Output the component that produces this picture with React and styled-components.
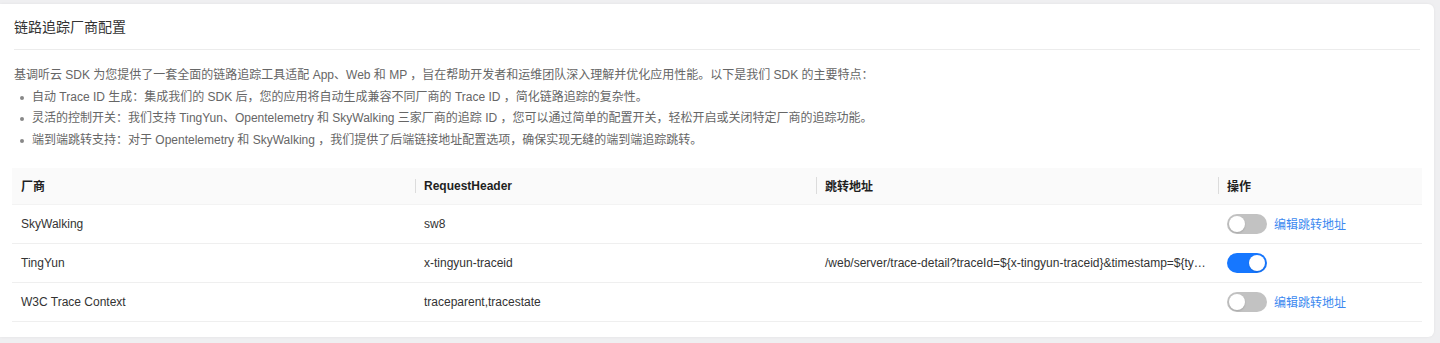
import React, { useState } from 'react'
import styled, { createGlobalStyle } from 'styled-components'

const GlobalStyle = createGlobalStyle`
  body {
    margin: 0;
    background: #efeff1;
    font-family: "Liberation Sans", "Noto Sans CJK SC", sans-serif;
  }
`

const Page = styled.div`
  padding: 4px 6px 8px 0;
`

const Card = styled.div`
  background: #fff;
  border-radius: 0 6px 6px 0;
  box-shadow: 0 0 3px rgba(0, 0, 0, 0.06);
  padding: 0 14px 15px;
`

const Title = styled.div`
  padding: 13px 0 12px;
  font-size: 14px;
  line-height: 20px;
  color: #333;
  border-bottom: 1px solid #ececec;
`

const Intro = styled.div`
  margin-top: 15px;
  font-size: 12px;
  line-height: 21.7px;
  color: #666;
`

const List = styled.ul`
  margin: 0;
  padding: 0;
  list-style: none;
`

const Item = styled.li`
  display: flex;
  align-items: center;

  &::before {
    content: '';
    width: 4px;
    height: 4px;
    border-radius: 50%;
    background: #888;
    margin: 0 8px 0 6px;
  }
`

const Table = styled.div`
  margin: 16px -2px 0;
  font-size: 12px;
`

const Row = styled.div`
  display: grid;
  grid-template-columns: 403px 401px 402px 1fr;
  align-items: center;
  height: ${p => (p.$head ? '36px' : '38px')};
  background: ${p => (p.$head ? '#fafafa' : '#fff')};
  border-bottom: 1px solid ${p => (p.$head ? '#f3f3f3' : '#efefef')};
  color: ${p => (p.$head ? '#1f1f1f' : '#333')};
  font-weight: ${p => (p.$head ? 700 : 400)};
`

const Cell = styled.div`
  position: relative;
  padding: 0 9px;
  white-space: nowrap;
  overflow: hidden;
  text-overflow: ellipsis;
  display: ${p => (p.$actions ? 'flex' : 'block')};
  align-items: center;
  gap: 7px;

  ${p =>
    p.$sep &&
    `
    &::before {
      content: '';
      position: absolute;
      left: 0;
      top: 50%;
      width: 1px;
      height: 19px;
      margin-top: -10px;
      background: #dcdcdc;
    }
  `}
`

const Switch = styled.button`
  position: relative;
  flex: none;
  width: 40px;
  height: 20px;
  border: none;
  padding: 0;
  border-radius: 10px;
  background: ${p => (p.$on ? '#1677ff' : '#c2c2c2')};
  cursor: pointer;

  &::after {
    content: '';
    position: absolute;
    top: 2px;
    left: ${p => (p.$on ? '22px' : '2px')};
    width: 16px;
    height: 16px;
    border-radius: 50%;
    background: #fff;
    box-shadow: 0 1px 2px rgba(0, 0, 0, 0.15);
  }
`

const Link = styled.a`
  color: #3c89f0;
  cursor: pointer;
`

const vendors = [
  { name: 'SkyWalking', header: 'sw8', url: '', on: false },
  {
    name: 'TingYun',
    header: 'x-tingyun-traceid',
    url: '/web/server/trace-detail?traceId=${x-tingyun-traceid}&timestamp=${ty_timestamp}',
    on: true
  },
  { name: 'W3C Trace Context', header: 'traceparent,tracestate', url: '', on: false }
]

export default function App() {
  const [rows, setRows] = useState(vendors)

  const toggle = i =>
    setRows(rows.map((r, j) => (j === i ? { ...r, on: !r.on } : r)))

  return (
    <>
      <GlobalStyle />
      <Page>
        <Card>
          <Title>链路追踪厂商配置</Title>

          <Intro>
            基调听云 SDK 为您提供了一套全面的链路追踪工具适配 App、Web 和 MP ，旨在帮助开发者和运维团队深入理解并优化应用性能。以下是我们 SDK 的主要特点：
            <List>
              <Item>自动 Trace ID 生成：集成我们的 SDK 后，您的应用将自动生成兼容不同厂商的 Trace ID ，简化链路追踪的复杂性。</Item>
              <Item>灵活的控制开关：我们支持 TingYun、Opentelemetry 和 SkyWalking 三家厂商的追踪 ID ，您可以通过简单的配置开关，轻松开启或关闭特定厂商的追踪功能。</Item>
              <Item>端到端跳转支持：对于 Opentelemetry 和 SkyWalking ，我们提供了后端链接地址配置选项，确保实现无缝的端到端追踪跳转。</Item>
            </List>
          </Intro>

          <Table>
            <Row $head>
              <Cell>厂商</Cell>
              <Cell $sep>RequestHeader</Cell>
              <Cell $sep>跳转地址</Cell>
              <Cell $sep>操作</Cell>
            </Row>
            {rows.map((r, i) => (
              <Row key={r.name}>
                <Cell>{r.name}</Cell>
                <Cell>{r.header}</Cell>
                <Cell>{r.url}</Cell>
                <Cell $actions>
                  <Switch $on={r.on} onClick={() => toggle(i)} />
                  {!r.on && <Link>编辑跳转地址</Link>}
                </Cell>
              </Row>
            ))}
          </Table>
        </Card>
      </Page>
    </>
  )
}
